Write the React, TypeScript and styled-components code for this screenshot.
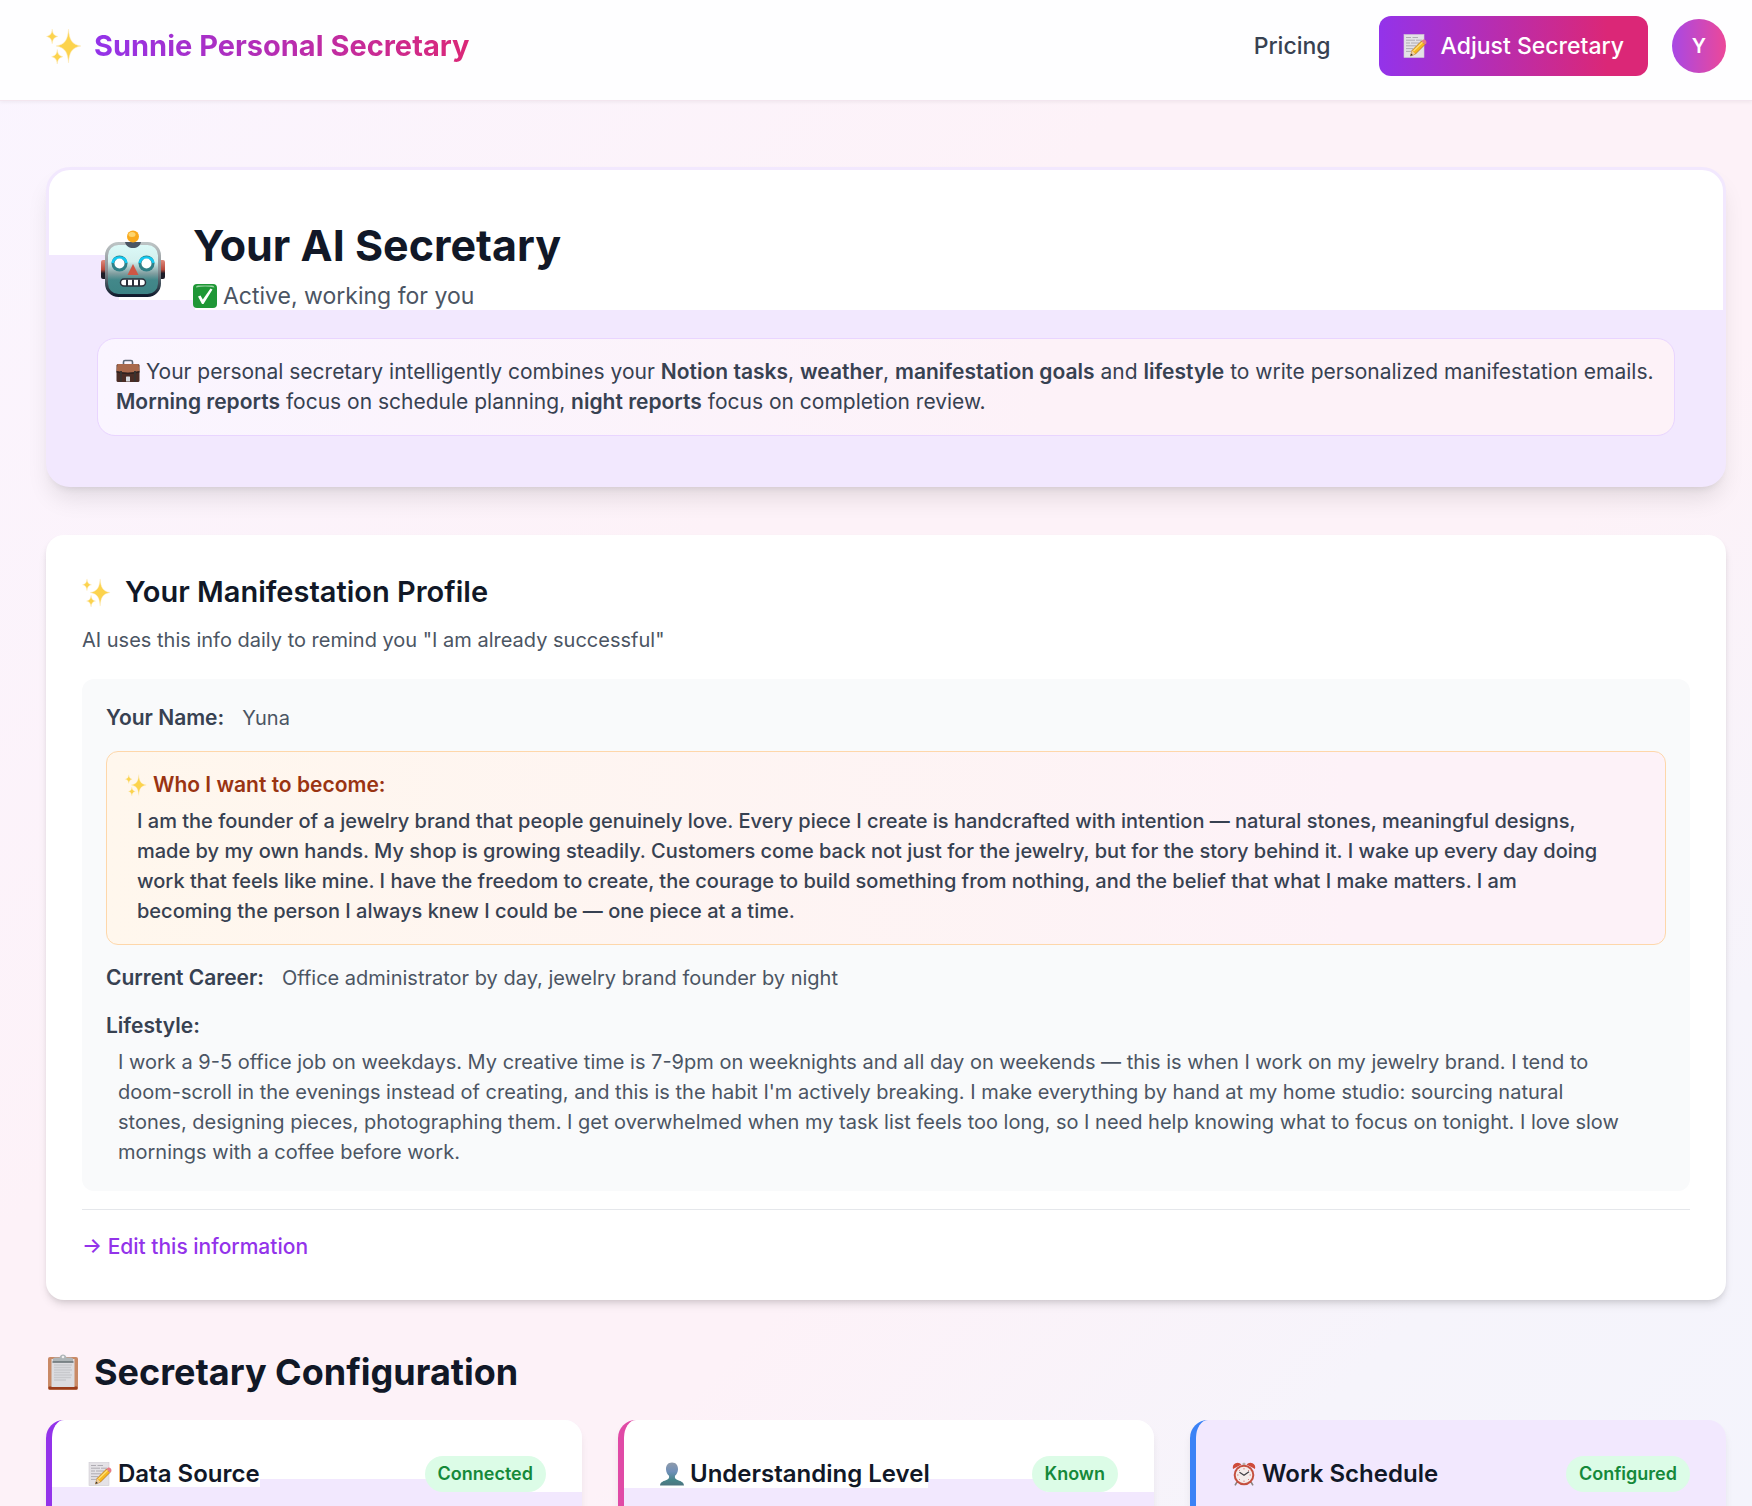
import React from "react";
import styled, { createGlobalStyle } from "styled-components";

const GlobalStyle = createGlobalStyle`
  *, *::before, *::after { box-sizing: border-box; }
  body { margin: 0; }
  h1, h2, h3, p, dl, dd, dt { margin: 0; font-size: inherit; font-weight: inherit; }
`;

const lavender = "#f2e8fe";

const Page = styled.div`
  display: flex;
  flex-direction: column;
  height: 100vh;
  overflow: hidden;
  font-family: Inter, "Noto Sans", sans-serif;
  font-size: 20px;
  line-height: 30px;
  color: #374151;
  background: linear-gradient(135deg, #faf5ff 0%, #fdf2f8 38%, #fdf2f8 64%, #f6f4fb 84%, #f4f4fc 100%);
`;

const Header = styled.header`
  display: flex;
  flex-shrink: 0;
  justify-content: space-between;
  align-items: center;
  height: 101px;
  padding: 0 26px 8px 46px;
  background: #fefeff;
  border-bottom: 1px solid #f3e6ef;
  box-shadow: 0 2px 3px rgba(0, 0, 0, 0.04);
`;

const Brand = styled.a`
  display: flex;
  align-items: center;
  gap: 12px;
  text-decoration: none;
`;

const BrandName = styled.span`
  font-size: 29px;
  line-height: 42px;
  font-weight: 700;
  color: transparent;
  background: linear-gradient(90deg, #9333ea, #db2777);
  background-clip: text;
  -webkit-background-clip: text;
`;

const Nav = styled.nav`
  display: flex;
  align-items: center;
  gap: 24px;
`;

const NavLink = styled.a`
  margin-right: 24px;
  font-size: 23px;
  font-weight: 500;
  color: #374151;
  text-decoration: none;
`;

const AdjustButton = styled.button`
  display: flex;
  align-items: center;
  gap: 14px;
  height: 60px;
  padding: 0 24px;
  border: 0;
  border-radius: 12px;
  font-family: inherit;
  font-size: 23px;
  font-weight: 500;
  color: #fff;
  background: linear-gradient(90deg, #9333ea, #db2777 85%);
`;

const Avatar = styled.button`
  width: 54px;
  height: 54px;
  padding: 0;
  border: 0;
  border-radius: 50%;
  font-family: inherit;
  font-size: 20px;
  font-weight: 600;
  color: #fff;
  background: linear-gradient(90deg, #a848e4, #ec4899);
`;

const Main = styled.main`
  flex-shrink: 0;
  padding: 66px 26px 48px 46px;
`;

const Hero = styled.section`
  padding: 48px;
  border: 3px solid ${lavender};
  border-radius: 24px;
  background:
    linear-gradient(#fff, #fff) 0 0 / 100% 85px no-repeat,
    linear-gradient(#fff, #fff) 70px 0 / 76px 130px no-repeat,
    linear-gradient(#fff, #fff) 146px 0 / 100% 140px no-repeat,
    ${lavender};
  box-shadow: 0 15px 23px -4px rgba(0, 0, 0, 0.1), 0 6px 9px -6px rgba(0, 0, 0, 0.12);
`;

const HeroTop = styled.div`
  display: flex;
  align-items: center;
  gap: 24px;
  margin-bottom: 24px;
`;

const RobotSlot = styled.div`
  display: flex;
  justify-content: center;
  width: 72px;
  padding-bottom: 4px;
`;

const HeroTitle = styled.h1`
  margin-bottom: 6px;
  font-size: 43px;
  line-height: 54px;
  font-weight: 700;
  color: #111827;
`;

const HeroStatus = styled.p`
  display: flex;
  align-items: center;
  gap: 6px;
  font-size: 23px;
  line-height: 36px;
  color: #4b5563;
`;

const HeroNote = styled.p`
  padding: 18px 6px 18px 18px;
  border: 1px solid #e9d5ff;
  border-radius: 18px;
  font-size: 21px;
  background: linear-gradient(90deg, #faf5ff, #fdf2f8 60%);
`;

const Bold = styled.strong`
  font-weight: 600;
`;

const ProfileCard = styled.section`
  margin-top: 48px;
  padding: 36px;
  border-radius: 18px;
  background: #fff;
  box-shadow: 0 6px 9px -1px rgba(0, 0, 0, 0.1), 0 3px 6px -3px rgba(0, 0, 0, 0.14);
`;

const CardTitle = styled.h2`
  display: flex;
  align-items: center;
  gap: 14px;
  font-size: 29px;
  line-height: 42px;
  font-weight: 600;
  color: #111827;
`;

const CardSubtitle = styled.p`
  margin: 12px 0 24px;
  color: #4b5563;
`;

const Details = styled.dl`
  display: flex;
  flex-direction: column;
  gap: 18px;
  padding: 24px;
  border-radius: 12px;
  background: #f9fafb;
`;

const InlineField = styled.div`
  display: flex;
  gap: 18px;
`;

const BlockField = styled.div`
  display: flex;
  flex-direction: column;
  gap: 6px;
`;

const Term = styled.dt`
  font-size: 21px;
  font-weight: 600;
  color: #374151;
`;

const Value = styled.dd<{ $indent?: boolean }>`
  padding-left: ${(p) => (p.$indent ? "12px" : "0")};
  color: #4b5563;
`;

const GoalBox = styled(BlockField)`
  padding: 18px;
  border: 1px solid #fed7aa;
  border-radius: 12px;
  background: linear-gradient(90deg, #fff7ed, #fdf2f8 80%);
`;

const GoalTerm = styled.dt`
  display: flex;
  align-items: center;
  gap: 6px;
  font-size: 21px;
  font-weight: 600;
  color: #9a3412;
`;

const GoalText = styled.dd`
  margin-left: 12px;
  font-weight: 500;
  color: #374151;
`;

const CardFooter = styled.div`
  margin-top: 18px;
  padding: 22px 0 2px;
  border-top: 1px solid #e5e7eb;
`;

const EditLink = styled.a`
  display: block;
  font-size: 21px;
  font-weight: 500;
  color: #9333ea;
  text-decoration: none;
`;

const SectionTitle = styled.h2`
  display: flex;
  align-items: center;
  gap: 14px;
  margin: 48px 0 24px;
  font-size: 36px;
  line-height: 48px;
  font-weight: 700;
  color: #111827;
`;

const ConfigGrid = styled.div`
  display: grid;
  grid-template-columns: repeat(3, 1fr);
  gap: 36px;
`;

const ConfigCard = styled.article<{ $accent: string; $fill: string }>`
  display: flex;
  align-items: flex-start;
  justify-content: space-between;
  min-height: 240px;
  padding: 36px;
  border-left: 6px solid ${(p) => p.$accent};
  border-radius: 18px;
  background: ${(p) => p.$fill};
  box-shadow: 0 6px 9px -1px rgba(0, 0, 0, 0.08);
`;

const ConfigTitle = styled.h3`
  display: flex;
  align-items: center;
  gap: 6px;
  font-size: 24px;
  line-height: 36px;
  font-weight: 600;
  color: #111827;
`;

const Pill = styled.span`
  padding: 0 13px;
  border-radius: 18px;
  font-size: 18px;
  line-height: 36px;
  font-weight: 600;
  color: #15893a;
  background: #dcfce7;
`;

const InlineIcon = styled.svg`
  flex-shrink: 0;
  vertical-align: -4px;
`;

type IconProps = { size: number };

const Sparkles = ({ size }: IconProps) => (
  <InlineIcon width={size} height={size} viewBox="0 0 32 32" aria-hidden="true">
    <g fill="#fcd34d" stroke="#fdecc0" strokeWidth="0.5">
      <path d="M20 1 C20.8 10 22.5 14.4 31 16 C22.5 17.6 20.8 22 20 31 C19.2 22 17.5 17.6 9 16 C17.5 14.4 19.2 10 20 1Z" />
      <path d="M5.500 1 C6 5 7 6.500 10.500 7.500 C7 8.500 6 10 5.500 14 C5 10 4 8.500 .5 7.500 C4 6.500 5 5 5.500 1Z" />
      <path d="M10 19 C10.500 23 11.500 24.500 15 25.500 C11.500 26.500 10.500 28 10 32 C9.500 28 8.500 26.500 5 25.500 C8.500 24.500 9.500 23 10 19Z" />
    </g>
  </InlineIcon>
);

const Robot = () => (
  <InlineIcon width="64" height="68" viewBox="0 0 64 68" aria-hidden="true">
    <defs>
      <linearGradient id="robotFace" x1="0" y1="0" x2="0" y2="1">
        <stop offset="0" stopColor="#dcfaf8" />
        <stop offset="0.35" stopColor="#d3f0ee" />
        <stop offset="0.58" stopColor="#7f9d9f" />
        <stop offset="0.7" stopColor="#43888a" />
        <stop offset="1" stopColor="#3c8384" />
      </linearGradient>
      <linearGradient id="robotEdge" x1="0" y1="0" x2="0" y2="1">
        <stop offset="0" stopColor="#bcc3c4" />
        <stop offset="0.5" stopColor="#8a8f94" />
        <stop offset="0.8" stopColor="#3b4a55" />
        <stop offset="1" stopColor="#111c2d" />
      </linearGradient>
      <linearGradient id="robotEar" x1="0" y1="0" x2="0" y2="1">
        <stop offset="0" stopColor="#e08a7c" />
        <stop offset="0.5" stopColor="#b84a3c" />
        <stop offset="0.7" stopColor="#1d1c28" />
        <stop offset="1" stopColor="#1d1c28" />
      </linearGradient>
    </defs>
    <rect x="0" y="30" width="6" height="19" rx="2" fill="url(#robotEar)" />
    <rect x="58" y="30" width="6" height="19" rx="2" fill="url(#robotEar)" />
    <rect x="5.500" y="13.500" width="53" height="52" rx="12" fill="url(#robotFace)" stroke="url(#robotEdge)" strokeWidth="3" />
    <path d="M24 12 H40 C39 16 36 18 32 18 C28 18 25 16 24 12Z" fill="#4b5563" />
    <circle cx="32" cy="6.500" r="6" fill="#f9a91c" />
    <ellipse cx="31" cy="4.500" rx="3.500" ry="2.500" fill="#fdd56d" />
    <circle cx="18.500" cy="33.500" r="8" fill="#2f7f86" />
    <circle cx="45.500" cy="33.500" r="8" fill="#2f7f86" />
    <path d="M11.500 33 A7.200 7.200 0 0 1 25.500 33" fill="none" stroke="#12c9f2" strokeWidth="2.500" />
    <path d="M38.500 33 A7.200 7.200 0 0 1 52.500 33" fill="none" stroke="#12c9f2" strokeWidth="2.500" />
    <circle cx="18.500" cy="33.500" r="5" fill="#fff" />
    <circle cx="45.500" cy="33.500" r="5" fill="#fff" />
    <path d="M32 34 L37.500 45 H26.500Z" fill="#cf5645" />
    <rect x="19.500" y="49" width="25" height="7" rx="3.500" fill="#fff" stroke="#2a2f3a" strokeWidth="1.500" />
    <path d="M26 49.500 V56 M32 49.500 V56 M38 49.500 V56" stroke="#2a2f3a" strokeWidth="2" />
  </InlineIcon>
);

const CheckMark = () => (
  <InlineIcon width="24" height="24" viewBox="0 0 24 24" aria-hidden="true">
    <rect width="24" height="24" rx="4" fill="#1f9736" />
    <path d="M3 3.500 Q3 1.500 5 1.500 H19 Q21 1.500 21.500 3.500 Q12 1.500 3 3.500Z" fill="#9bd4a4" />
    <path d="M5 12.500 L7.500 11.500 L9.800 15.500 L17.500 4.500 L19.500 5.500 L10.500 20 H9Z" fill="#fff" />
  </InlineIcon>
);

const Memo = ({ size }: IconProps) => (
  <InlineIcon width={size} height={size} viewBox="0 0 24 24" aria-hidden="true">
    <rect x="1" y="0.500" width="20" height="23" fill="#e4e2e6" stroke="#cfccd3" strokeWidth="0.600" />
    <path d="M3 3.500 H8 M9.500 3.500 H15 M3 6.200 H12 M13 6.200 H19 M3 9 H7 M8 9 H16 M3 11.800 H13 M3 14.600 H10 M3 17.400 H8" stroke="#a8a6ad" strokeWidth="0.900" />
    <path d="M9 16.500 L18.500 7 L22 10.500 L12.500 20 L7.500 22Z" fill="#f6b81f" stroke="#a8651b" strokeWidth="0.700" />
    <path d="M10.500 17 L19.500 8.300" stroke="#fde07a" strokeWidth="1.200" />
    <path d="M18.500 7 L20 5.600 Q21.500 5 22.800 6.500 Q24 8 23.300 9.200 L22 10.500Z" fill="#e77a86" />
    <path d="M9 16.500 L12.500 20 L7.500 22Z" fill="#efcf9d" />
    <path d="M8.200 19.500 L9.800 21.100 L7.500 22Z" fill="#333" />
  </InlineIcon>
);

const Briefcase = () => (
  <InlineIcon width="24" height="24" viewBox="0 0 24 24" aria-hidden="true">
    <path d="M7.500 6 V3 Q7.500 1.500 9 1.500 H15 Q16.500 1.500 16.500 3 V6" fill="none" stroke="#5c6674" strokeWidth="1.600" />
    <rect x="0.500" y="5" width="23" height="18" rx="1.500" fill="#4a2c25" />
    <path d="M1.500 5 H22.500 L23.500 12 Q12 15.500 0.500 12Z" fill="#a9694c" />
    <path d="M0.500 12 Q12 15.500 23.500 12 V13.500 Q12 17 0.500 13.500Z" fill="#2d211f" />
    <rect x="4" y="12" width="2" height="11" fill="#38322f" />
    <rect x="18" y="12" width="2" height="11" fill="#38322f" />
    <rect x="10" y="17.500" width="4" height="5" rx="0.500" fill="#d6dbe0" />
  </InlineIcon>
);

const Clipboard = () => (
  <InlineIcon width="34" height="36" viewBox="0 0 34 36" aria-hidden="true">
    <rect x="2" y="3" width="30" height="33" rx="2" fill="#c98a66" />
    <rect x="2.500" y="32.500" width="29" height="3" rx="1" fill="#9a3d1c" />
    <rect x="5.500" y="5" width="23" height="28" fill="#dcdce0" />
    <path d="M8 11 H26 M8 13.500 H25 M8 16 H26 M8 18.500 H24 M8 21 H26 M8 23.500 H25 M8 26 H20" stroke="#c8c9cd" strokeWidth="1.300" />
    <path d="M7 8 V5 Q7 3.500 9 3.500 H13.500 Q14.500 0.500 17 0.500 Q19.500 0.500 20.500 3.500 H25 Q27 3.500 27 5 V8Z" fill="#aeb5b8" />
    <circle cx="17" cy="3" r="1.300" fill="#eee" />
    <rect x="6.500" y="7.200" width="21" height="1.600" fill="#6b7579" />
  </InlineIcon>
);

const Bust = () => (
  <InlineIcon width="24" height="24" viewBox="0 0 24 24" aria-hidden="true">
    <defs>
      <linearGradient id="bust" x1="0" y1="0" x2="0" y2="1">
        <stop offset="0" stopColor="#8f9bab" />
        <stop offset="0.4" stopColor="#6f8fb8" />
        <stop offset="0.75" stopColor="#47858a" />
        <stop offset="1" stopColor="#4d7580" />
      </linearGradient>
    </defs>
    <path d="M12 0.500 C16 0.500 18.200 3.300 18 7.500 C17.800 10.500 16.500 12.500 15 13.800 C14.600 16 15.300 17 17 17.800 C20 19.200 23.500 19.500 24 23.500 H0 C0.500 19.500 4 19.200 7 17.800 C8.700 17 9.400 16 9 13.800 C7.500 12.500 6.200 10.500 6 7.500 C5.800 3.300 8 0.500 12 0.500Z" fill="url(#bust)" />
  </InlineIcon>
);

const AlarmClock = () => (
  <InlineIcon width="24" height="24" viewBox="0 0 24 24" aria-hidden="true">
    <path d="M5 20 L3 23.300 M19 20 L21 23.300" stroke="#8b8580" strokeWidth="1.600" />
    <path d="M1 7 Q0 3 3.500 1.200 Q7 0 9.500 2.500Z M23 7 Q24 3 20.500 1.200 Q17 0 14.500 2.500Z" fill="#cf4b3a" />
    <rect x="10.500" y="0.800" width="3" height="3" rx="1" fill="#b9b4b0" />
    <circle cx="12" cy="13" r="10.300" fill="#c4503f" />
    <circle cx="12" cy="13" r="8.300" fill="#f4ecea" />
    <path d="M12 6 V7.500 M12 18.500 V20 M5 13 H6.500 M17.500 13 H19 M7 8 L8 9 M17 8 L16 9 M7 18 L8 17 M17 18 L16 17" stroke="#d77" strokeWidth="0.900" />
    <path d="M7.500 10.300 L12 13.200 L17 9.800" fill="none" stroke="#3d3d42" strokeWidth="1.200" />
  </InlineIcon>
);

const cards = [
  {
    title: "Data Source",
    status: "Connected",
    accent: "#9333ea",
    icon: <Memo size={24} />,
    fill: `linear-gradient(#fff, #fff) 0 0 / 100% 59px no-repeat, linear-gradient(#fff, #fff) 0 0 / 208px 67px no-repeat, linear-gradient(#fff, #fff) 100% 0 / 120px 72px no-repeat, ${lavender}`,
  },
  {
    title: "Understanding Level",
    status: "Known",
    accent: "#e04aa6",
    icon: <Bust />,
    fill: `linear-gradient(#fff, #fff) 0 0 / 100% 59px no-repeat, linear-gradient(#fff, #fff) 0 0 / 304px 68px no-repeat, linear-gradient(#fff, #fff) 100% 0 / 108px 72px no-repeat, ${lavender}`,
  },
  {
    title: "Work Schedule",
    status: "Configured",
    accent: "#3b82f6",
    icon: <AlarmClock />,
    fill: lavender,
  },
];

export default function App() {
  return (
    <>
      <GlobalStyle />
      <Page>
        <Header>
          <Brand href="#">
            <Sparkles size={36} />
            <BrandName>Sunnie Personal Secretary</BrandName>
          </Brand>
          <Nav>
            <NavLink href="#pricing">Pricing</NavLink>
            <AdjustButton type="button">
              <Memo size={24} />
              Adjust Secretary
            </AdjustButton>
            <Avatar type="button">Y</Avatar>
          </Nav>
        </Header>
        <Main>
          <Hero>
            <HeroTop>
              <RobotSlot>
                <Robot />
              </RobotSlot>
              <div>
                <HeroTitle>Your AI Secretary</HeroTitle>
                <HeroStatus>
                  <CheckMark />
                  Active, working for you
                </HeroStatus>
              </div>
            </HeroTop>
            <HeroNote>
              <Briefcase /> Your personal secretary intelligently combines your <Bold>Notion tasks</Bold>,{" "}
              <Bold>weather</Bold>, <Bold>manifestation goals</Bold> and <Bold>lifestyle</Bold> to write personalized
              manifestation emails. <Bold>Morning reports</Bold> focus on schedule planning, <Bold>night reports</Bold>{" "}
              focus on completion review.
            </HeroNote>
          </Hero>

          <ProfileCard>
            <CardTitle>
              <Sparkles size={29} />
              Your Manifestation Profile
            </CardTitle>
            <CardSubtitle>AI uses this info daily to remind you "I am already successful"</CardSubtitle>
            <Details>
              <InlineField>
                <Term>Your Name:</Term>
                <Value>Yuna</Value>
              </InlineField>
              <GoalBox>
                <GoalTerm>
                  <Sparkles size={22} />
                  Who I want to become:
                </GoalTerm>
                <GoalText>
                  I am the founder of a jewelry brand that people genuinely love. Every piece I create is handcrafted
                  with intention — natural stones, meaningful designs,
                  <br />
                  made by my own hands. My shop is growing steadily. Customers come back not just for the jewelry, but
                  for the story behind it. I wake up every day doing
                  <br />
                  work that feels like mine. I have the freedom to create, the courage to build something from
                  nothing, and the belief that what I make matters. I am
                  <br />
                  becoming the person I always knew I could be — one piece at a time.
                </GoalText>
              </GoalBox>
              <InlineField>
                <Term>Current Career:</Term>
                <Value>Office administrator by day, jewelry brand founder by night</Value>
              </InlineField>
              <BlockField>
                <Term>Lifestyle:</Term>
                <Value $indent>
                  I work a 9-5 office job on weekdays. My creative time is 7-9pm on weeknights and all day on weekends
                  — this is when I work on my jewelry brand. I tend to
                  <br />
                  doom-scroll in the evenings instead of creating, and this is the habit I'm actively breaking. I make
                  everything by hand at my home studio: sourcing natural
                  <br />
                  stones, designing pieces, photographing them. I get overwhelmed when my task list feels too long, so
                  I need help knowing what to focus on tonight. I love slow
                  <br />
                  mornings with a coffee before work.
                </Value>
              </BlockField>
            </Details>
            <CardFooter>
              <EditLink href="#edit">→ Edit this information</EditLink>
            </CardFooter>
          </ProfileCard>

          <SectionTitle>
            <Clipboard />
            Secretary Configuration
          </SectionTitle>
          <ConfigGrid>
            {cards.map((card) => (
              <ConfigCard key={card.title} $accent={card.accent} $fill={card.fill}>
                <ConfigTitle>
                  {card.icon}
                  {card.title}
                </ConfigTitle>
                <Pill>{card.status}</Pill>
              </ConfigCard>
            ))}
          </ConfigGrid>
        </Main>
      </Page>
    </>
  );
}
